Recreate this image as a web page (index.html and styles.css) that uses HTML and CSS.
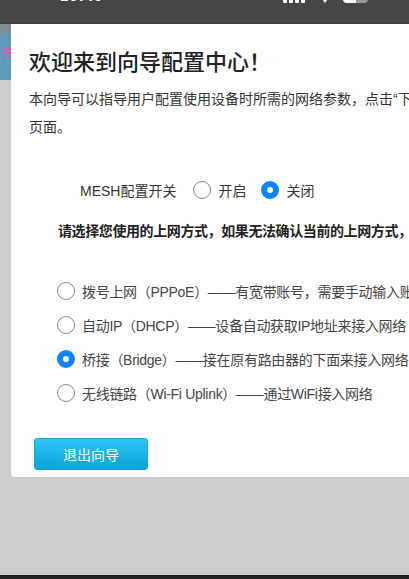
FILE: index.html
```html
<!DOCTYPE html>
<html lang="zh-CN">
<head>
<meta charset="utf-8">
<title>向导配置</title>
<link rel="stylesheet" href="styles.css">
</head>
<body>
  <div class="statusbar">
    <span class="status-time">10:40</span>
    <span class="status-icons">
      <svg class="signal" width="24" height="14" viewBox="0 0 24 14"><rect x="0" y="8" width="4" height="6" rx="1"/><rect x="6" y="5" width="4" height="9" rx="1"/><rect x="12" y="2" width="4" height="12" rx="1"/><rect x="18" y="0" width="4" height="14" rx="1"/></svg>
      <svg class="wifi" width="16" height="14" viewBox="0 0 16 14"><path d="M8 14 L5 10 A5 5 0 0 1 11 10 Z"/></svg>
      <span class="battery"><span class="battery-level"></span></span>
    </span>
  </div>

  <div class="screen">
    <div class="backdrop">
      <div class="backdrop-header"><span class="backdrop-glyph">关</span></div>
    </div>

    <div class="dialog">
      <h1 class="title">欢迎来到向导配置中心<span class="bang">！</span></h1>
      <p class="intro">本向导可以指导用户配置使用设备时所需的网络参数，点击“下一步”按钮进入下一个配置页面。</p>

      <div class="mesh-row">
        <span class="mesh-label">MESH配置开关</span>
        <label class="radio"><span class="dot"></span>开启</label>
        <label class="radio"><span class="dot checked"></span>关闭</label>
      </div>

      <p class="hint">请选择您使用的上网方式，如果无法确认当前的上网方式，请选择桥接方式。</p>

      <ul class="modes">
        <li class="radio"><span class="dot"></span>拨号上网（PPPoE）——有宽带账号，需要手动输入账号密码</li>
        <li class="radio"><span class="dot"></span>自动IP（DHCP）——设备自动获取IP地址来接入网络</li>
        <li class="radio"><span class="dot checked"></span>桥接（Bridge）——接在原有路由器的下面来接入网络</li>
        <li class="radio"><span class="dot"></span>无线链路（Wi-Fi Uplink）——通过WiFi接入网络</li>
      </ul>

      <button class="exit-btn" type="button">退出向导</button>
    </div>
  </div>

  <div class="homebar"></div>
</body>
</html>
```

FILE: styles.css
```css
html, body {
  margin: 0;
  padding: 0;
}

body {
  width: 409px;
  height: 579px;
  overflow: hidden;
  background: #cccccc;
  font-family: "Liberation Sans", "Noto Sans CJK SC", sans-serif;
  color: #333;
  display: flex;
  flex-direction: column;
}

/* top system bar */
.statusbar {
  height: 24px;
  flex: none;
  background: #464646;
  border-bottom: 1px solid #3e3e3e;
  box-sizing: border-box;
  display: flex;
  justify-content: space-between;
  overflow: hidden;
  padding: 0 41px 0 60px;
}

.status-time {
  color: #fff;
  font-weight: bold;
  font-size: 15px;
  line-height: 15px;
  margin-top: -12px;
  letter-spacing: 1px;
}

.status-icons {
  display: flex;
  align-items: flex-end;
  gap: 10px;
  height: 3px;
}

.signal, .wifi {
  fill: #fff;
  flex: none;
}

.battery {
  width: 25px;
  height: 12px;
  border-radius: 4px;
  background: #9a9a9a;
  overflow: hidden;
  display: flex;
  flex: none;
}

.battery-level {
  width: 13px;
  background: #fff;
}

/* main screen area */
.screen {
  flex: 1;
  display: flex;
  align-items: flex-start;
  min-height: 0;
}

.backdrop {
  width: 11px;
  flex: none;
}

.backdrop-header {
  height: 56px;
  background: #5b9cbb;
  border-top: 10px solid #7f8e96;
  box-sizing: border-box;
  overflow: hidden;
  display: flex;
  justify-content: flex-end;
  padding-top: 10px;
}

.backdrop-glyph {
  color: #e05aa8;
  font-size: 14px;
  line-height: 16px;
  margin-right: -5px;
}

.dialog {
  width: 640px;
  flex: none;
  background: #fff;
  border-radius: 0 0 4px 4px;
  padding: 24px 18px 7px;
  box-sizing: border-box;
}

.title {
  margin: 0;
  height: 30px;
  font-size: 22px;
  line-height: 30px;
  font-weight: 500;
  color: #222;
}

/* centred full-width exclamation mark */
.bang {
  font-family: "Noto Sans CJK TC", sans-serif;
  line-height: 1;
}

.intro {
  margin: 7px 0 0;
  width: 548px;
  font-size: 14px;
  line-height: 28px;
  color: #333;
}

.mesh-row {
  margin-top: 39px;
  padding-left: 51px;
  display: flex;
  align-items: center;
  height: 20px;
  font-size: 14px;
  color: #333;
  white-space: nowrap;
}

.mesh-label {
  margin-right: 17px;
}

.mesh-row .radio + .radio {
  margin-left: 15px;
}

.radio {
  display: flex;
  align-items: center;
}

.dot {
  width: 18px;
  height: 18px;
  box-sizing: border-box;
  border: 1.5px solid #8a8a8a;
  border-radius: 50%;
  margin-right: 7px;
  flex: none;
  background: #fff;
}

.dot.checked {
  border: 6px solid #0a84ff;
  background: #fff;
}

.hint {
  margin: 21px 0 0;
  padding-left: 29px;
  font-size: 14px;
  line-height: 20px;
  font-weight: bold;
  letter-spacing: -0.4px;
  color: #222;
  white-space: nowrap;
}

.modes {
  list-style: none;
  margin: 33px 0 0;
  padding: 0 0 0 28px;
}

.modes li {
  height: 34px;
  font-size: 14px;
  color: #444;
  letter-spacing: -0.3px;
  white-space: nowrap;
}

.exit-btn {
  margin-top: 28px;
  margin-left: 5px;
  display: block;
  width: 114px;
  height: 32px;
  border: 1px solid #12a8dc;
  border-radius: 3px;
  background: linear-gradient(#30c5f5, #08a3d7);
  color: #fff;
  font-family: inherit;
  font-size: 14px;
  padding: 0;
}

.homebar {
  height: 4px;
  flex: none;
  background: #222;
}
```
